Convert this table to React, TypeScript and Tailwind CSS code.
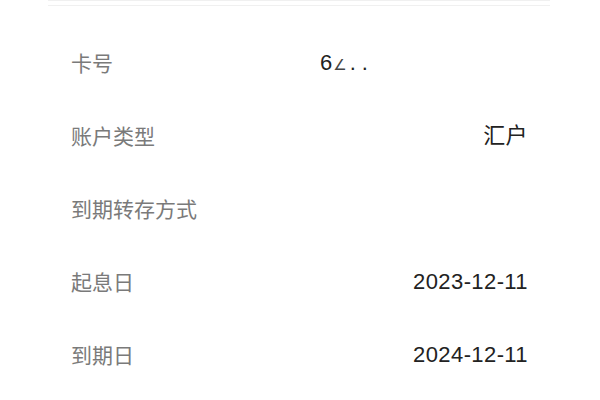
import React from "react";

const rows: { label: string; value: string }[] = [
  { label: "账户类型", value: "汇户" },
  { label: "到期转存方式", value: "" },
  { label: "起息日", value: "2023-12-11" },
  { label: "到期日", value: "2024-12-11" },
];

export default function App() {
  return (
    <div
      className="w-[600px] h-[400px] bg-white overflow-hidden"
      style={{ fontFamily: '"Liberation Sans", "Noto Sans CJK SC", sans-serif' }}
    >
      <div className="mx-[48px] w-[502px] h-[6px] border-t border-b border-[#f0f0f0]" />
      <div className="pt-[20px] pl-[71px] pr-[72px]">
        <div className="flex items-center h-[73px]">
          <span className="w-[249px] text-[21px] text-[#7a7a7a]" style={{ fontFamily: '"Noto Sans CJK SC", sans-serif' }}>
            卡号
          </span>
          <span className="text-[22px] text-[#222] flex items-baseline">
            6<span className="text-[15px] text-[#444] ml-[1px]" style={{ fontFamily: '"DejaVu Sans", sans-serif' }}>∠</span>
            <span className="ml-[3px] tracking-[6px]">..</span>
          </span>
        </div>
        {rows.map((r) => (
          <div key={r.label} className="flex items-center justify-between h-[73px]">
            <span className="text-[21px] text-[#7a7a7a]" style={{ fontFamily: '"Noto Sans CJK SC", sans-serif' }}>
              {r.label}
            </span>
            <span className="text-[22px] text-[#222] tracking-[0.4px]">{r.value}</span>
          </div>
        ))}
      </div>
    </div>
  );
}
